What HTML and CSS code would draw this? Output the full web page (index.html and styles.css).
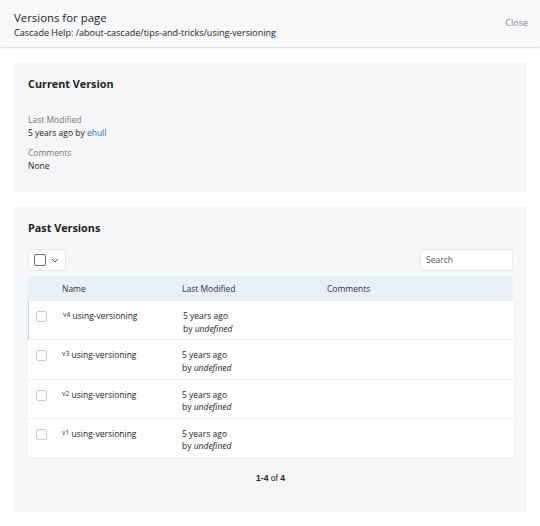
FILE: index.html
```html
<!DOCTYPE html>
<html>
<head>
<meta charset="utf-8">
<link rel="stylesheet" href="styles.css">
</head>
<body>
<header class="hdr">
  <div class="hdr-text">
    <div class="hdr-title">Versions for page</div>
    <div class="hdr-sub">Cascade Help: /about-cascade/tips-and-tricks/using-versioning</div>
  </div>
  <div class="hdr-close">Close</div>
</header>
<main class="main">
  <section class="card card-current">
    <h2 class="card-title">Current Version</h2>
    <div class="field">
      <div class="label">Last Modified</div>
      <div class="value">5 years ago by <a class="link">ehull</a></div>
    </div>
    <div class="field">
      <div class="label">Comments</div>
      <div class="value">None</div>
    </div>
  </section>
  <section class="card card-past">
    <h2 class="card-title">Past Versions</h2>
    <div class="toolbar">
      <div class="bulk"><span class="cb cb-big"></span><svg class="chev" width="8" height="5" viewBox="0 0 8 5"><path d="M1 1l3 3 3-3" fill="none" stroke="#555" stroke-width="1"/></svg></div>
      <div class="search">Search</div>
    </div>
    <div class="table">
      <div class="row head">
        <div class="c-cb"></div>
        <div class="c-name">Name</div>
        <div class="c-mod">Last Modified</div>
        <div class="c-com">Comments</div>
      </div>
      <div class="row item first">
        <div class="c-cb"><span class="cb"></span></div>
        <div class="c-name"><sup class="ver">v4</sup> using-versioning</div>
        <div class="c-mod">5 years ago<br>by <em>undefined</em></div>
        <div class="c-com"></div>
      </div>
      <div class="row item">
        <div class="c-cb"><span class="cb"></span></div>
        <div class="c-name"><sup class="ver">v3</sup> using-versioning</div>
        <div class="c-mod">5 years ago<br>by <em>undefined</em></div>
        <div class="c-com"></div>
      </div>
      <div class="row item">
        <div class="c-cb"><span class="cb"></span></div>
        <div class="c-name"><sup class="ver">v2</sup> using-versioning</div>
        <div class="c-mod">5 years ago<br>by <em>undefined</em></div>
        <div class="c-com"></div>
      </div>
      <div class="row item">
        <div class="c-cb"><span class="cb"></span></div>
        <div class="c-name"><sup class="ver">v1</sup> using-versioning</div>
        <div class="c-mod">5 years ago<br>by <em>undefined</em></div>
        <div class="c-com"></div>
      </div>
    </div>
    <div class="pager"><b>1-4</b> of <b>4</b></div>
  </section>
</main>
</body>
</html>
```
FILE: styles.css
```css
* { box-sizing: border-box; }
html, body { margin: 0; padding: 0; background: #fff; }
body {
  font-family: "Open Sans", "Noto Sans", sans-serif;
  color: #222;
  width: 540px;
  height: 526px;
  overflow: hidden;
}
.hdr {
  display: flex;
  align-items: stretch;
  height: 47px;
  background: #f7f8fa;
  box-shadow: 0 1px 2px rgba(0,0,0,0.18);
  position: relative;
}
.hdr-text {
  flex: 1;
  padding: 9px 0 0 14px;
}
.hdr-title { font-size: 11.4px; line-height: 17px; color: #222; }
.hdr-sub { font-size: 9.05px; line-height: 14px; color: #222; }
.hdr-close {
  width: 50px;
  border-left: 1px solid #f0f1f3;
  margin: 0 0 5px;
  font-size: 9px;
  color: #888;
  display: flex;
  align-items: center;
  justify-content: flex-end;
  padding-right: 12px;
  padding-top: 3px;
}
.main {
  padding: 16px 13px 0 14px;
  display: flex;
  flex-direction: column;
  gap: 15px;
}
.card {
  background: #f5f6f8;
  padding: 13px 14px 14px;
}
.card-current { height: 129px; }
.card-title {
  margin: 0;
  font-size: 10.8px;
  font-weight: 700;
  line-height: 16px;
  color: #222;
}
.card-current .card-title { margin-bottom: 21px; }
.field { margin-bottom: 7px; }
.label { font-size: 8.5px; line-height: 13px; color: #777; }
.value { font-size: 8.5px; line-height: 13px; color: #222; }
.link { color: #3a6ea5; }
.card-past { padding-bottom: 0; height: 305px; }
.toolbar {
  display: flex;
  justify-content: space-between;
  margin-top: 13px;
  margin-bottom: 5px;
}
.bulk {
  width: 38px;
  height: 22px;
  background: #fff;
  border: 1px solid #e3e6ea;
  border-radius: 3px;
  display: flex;
  align-items: center;
  padding-left: 5px;
  gap: 5px;
}
.cb {
  display: inline-block;
  width: 11px;
  height: 11px;
  border: 1px solid #c8ccd1;
  border-radius: 2px;
  background: #fff;
}
.cb-big { width: 12px; height: 12px; border: 1.5px solid #666; }
.chev { display: block; }
.search {
  width: 93px;
  height: 22px;
  background: #fff;
  border: 1px solid #e3e6ea;
  border-radius: 3px;
  font-size: 8.5px;
  color: #555;
  padding: 4px 0 0 5px;
}
.table { background: #fff; }
.row {
  display: grid;
  grid-template-columns: 34px 120px 145px 1fr;
}
.head {
  height: 25px;
  align-items: center;
  background: #e8eff7;
  font-size: 8.5px;
  color: #333;
}
.item {
  height: 39.25px;
  align-items: start;
  padding-top: 9px;
  border-bottom: 1px solid #eef1f5;
  font-size: 8.5px;
  line-height: 12.5px;
  color: #222;
}
.item.first { border-left: 1px solid #b7d4ef; }
.item .c-cb { padding-left: 8px; padding-top: 1px; display: flex; }
.item.first .c-cb { padding-left: 7px; }
.ver { font-size: 6.8px; vertical-align: 2px; color: #333; line-height: 0; }
.c-mod em { font-style: italic; }
.pager {
  text-align: center;
  font-family: "Liberation Sans", Arial, sans-serif;
  font-size: 8.5px;
  color: #222;
  margin-top: 15px;
}
.pager b { font-weight: 700; }
```
